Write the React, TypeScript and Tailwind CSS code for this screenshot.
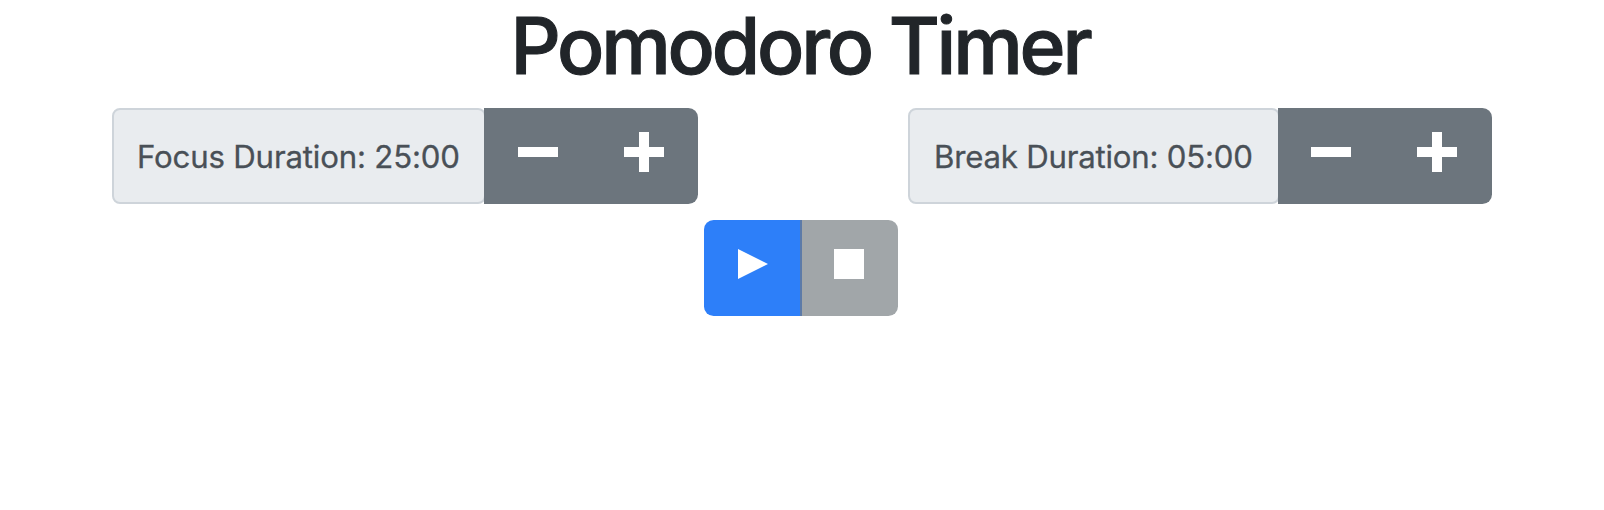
import React from "react";

function MinusIcon() {
  return (
    <svg width="40" height="40" viewBox="0 0 40 40" aria-hidden="true">
      <path d="M0 15h40v10H0z" fill="#fff" />
    </svg>
  );
}

function PlusIcon() {
  return (
    <svg width="40" height="40" viewBox="0 0 40 40" aria-hidden="true">
      <path d="M15 0h10v15h15v10H25v15H15V25H0V15h15z" fill="#fff" />
    </svg>
  );
}

type DurationProps = {
  label: string;
  labelClass: string;
  textClass: string;
  iconsClass: string;
};

function Duration({ label, labelClass, textClass, iconsClass }: DurationProps) {
  return (
    <div className="flex h-24">
      <span
        className={`flex items-center rounded-lg border-2 border-[#ced4da] bg-[#e9ecef] text-[#495057] ${labelClass}`}
      >
        <span
          className={`pt-0.5 text-[31.2px] leading-[48px] whitespace-nowrap [-webkit-text-stroke:0.3px_#495057] ${textClass}`}
        >
          {label}
        </span>
      </span>
      <div className={`-ml-0.5 flex w-[214px] gap-[66px] rounded-r-[9.6px] bg-[#6c757d] pt-6 ${iconsClass}`}>
        <button className="h-10 w-10" aria-label="Decrease">
          <MinusIcon />
        </button>
        <button className="h-10 w-10" aria-label="Increase">
          <PlusIcon />
        </button>
      </div>
    </div>
  );
}

export default function App() {
  return (
    <main className="h-[510px] bg-white font-['Inter',sans-serif]">
      <h1 className="h-[108px] pt-px pr-[4px] text-center text-[78.4px] leading-[90px] font-medium tracking-[-3.2px] text-[#212529] [-webkit-text-stroke:1px_#212529]">
        Pomodoro Timer
      </h1>
      <div className="flex justify-between pr-28 pl-28">
        <Duration
          label="Focus Duration: 25:00"
          labelClass="w-[374px] pl-[23px]"
          textClass="tracking-[-0.18px]"
          iconsClass="pl-[33.5px]"
        />
        <Duration
          label="Break Duration: 05:00"
          labelClass="w-[372px] pl-6"
          textClass="tracking-[-0.22px]"
          iconsClass="pl-[33px]"
        />
      </div>
      <div className="mt-4 ml-[704px] flex h-24 w-[194px] overflow-hidden rounded-[9.6px]">
        <button className="flex w-24 items-start bg-[#2d7ff9] pt-[29px] pl-[34px]" aria-label="Start">
          <svg width="30" height="30" viewBox="0 0 30 30" aria-hidden="true">
            <path d="M0 0l30 15L0 30z" fill="#fff" />
          </svg>
        </button>
        <button
          className="flex w-[98px] items-start border-l-2 border-[#5d7ba8] bg-[#a1a6a9] pt-[29px] pl-8"
          aria-label="Stop"
        >
          <svg width="30" height="30" viewBox="0 0 30 30" aria-hidden="true">
            <path d="M0 0h30v30H0z" fill="#fff" />
          </svg>
        </button>
      </div>
    </main>
  );
}
